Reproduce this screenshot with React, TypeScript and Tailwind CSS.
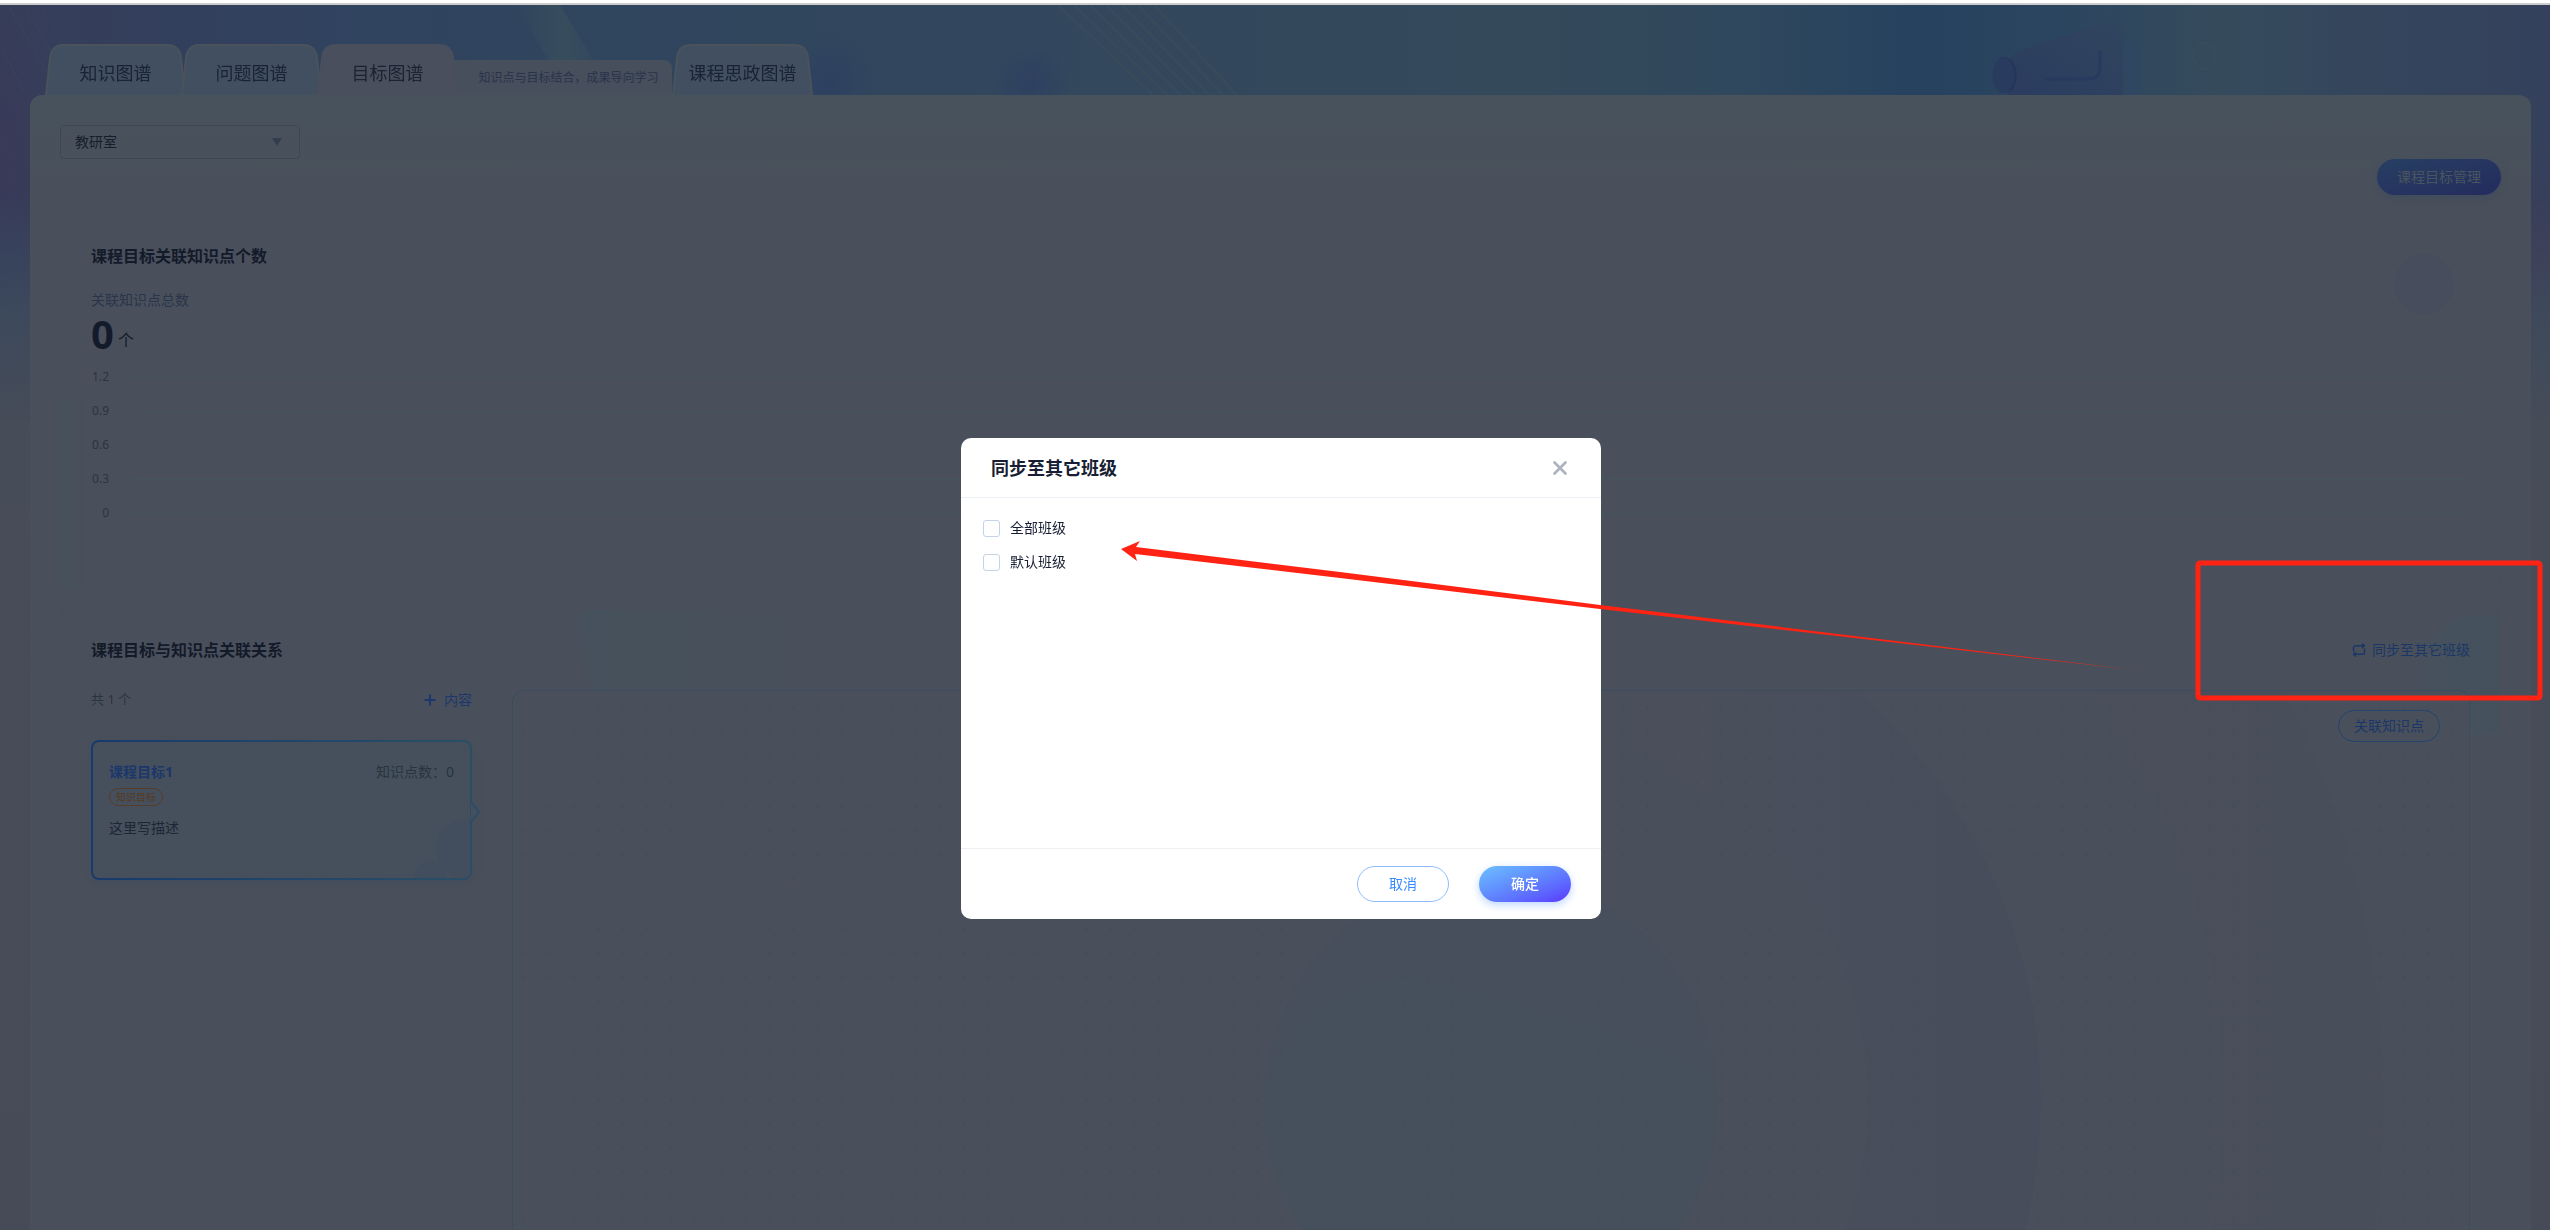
import { X, Plus } from 'lucide-react';

const axisLabels = ['1.2', '0.9', '0.6', '0.3', '0'];
const classes = ['全部班级', '默认班级'];

interface TabProps {
  label: string;
  active?: boolean;
}

function Tab({ label, active }: TabProps) {
  return (
    <button
      type="button"
      role="tab"
      aria-selected={!!active}
      className="relative -mr-[5px] flex h-[51px] w-[141px] items-center justify-center pt-1.5 text-lg text-[#1a2332]"
    >
      <svg className="absolute inset-0 h-full w-full" viewBox="0 0 141 51" preserveAspectRatio="none" aria-hidden="true">
        <path
          d="M1 51 L5 14 C6 5 11 1 19 1 H122 C131 1 135 5 136 14 L140 51"
          fill={active ? '#494f5c' : '#414f60'}
          stroke={active ? '#494f5c' : '#4a535c'}
          strokeWidth="2"
        />
      </svg>
      <span className="relative">{label}</span>
    </button>
  );
}

function Banner() {
  return (
    <svg className="absolute inset-0 h-full w-full" viewBox="0 0 2550 1225" preserveAspectRatio="none" aria-hidden="true">
      <defs>
        <linearGradient id="sky" x1="0" x2="1" y1="0" y2="0">
          <stop offset="0" stopColor="#363d59" />
          <stop offset="0.06" stopColor="#333f5c" />
          <stop offset="0.14" stopColor="#30435f" />
          <stop offset="0.3" stopColor="#30465d" />
          <stop offset="0.44" stopColor="#33475d" />
          <stop offset="0.6" stopColor="#34495a" />
          <stop offset="0.68" stopColor="#30485d" />
          <stop offset="0.75" stopColor="#26425f" />
          <stop offset="0.81" stopColor="#2c455f" />
          <stop offset="0.87" stopColor="#354b5c" />
          <stop offset="0.93" stopColor="#34455c" />
          <stop offset="1" stopColor="#35415c" />
        </linearGradient>
        <linearGradient id="fade" x1="0" x2="0" y1="0" y2="1">
          <stop offset="0.15" stopColor="#464c58" stopOpacity="0" />
          <stop offset="0.25" stopColor="#414e5c" stopOpacity="0.7" />
          <stop offset="0.34" stopColor="#464c58" />
          <stop offset="1" stopColor="#464b57" />
        </linearGradient>
        <radialGradient id="violet">
          <stop offset="0" stopColor="#3b3958" />
          <stop offset="1" stopColor="#3b3958" stopOpacity="0" />
        </radialGradient>
        <radialGradient id="indigo">
          <stop offset="0" stopColor="#2c3d62" stopOpacity="0.7" />
          <stop offset="1" stopColor="#2c3d62" stopOpacity="0" />
        </radialGradient>
        <linearGradient id="ray" x1="0" x2="1" y1="0" y2="0">
          <stop offset="0" stopColor="#3c525b" stopOpacity="0" />
          <stop offset="0.5" stopColor="#3c525b" stopOpacity="0.6" />
          <stop offset="1" stopColor="#3c525b" stopOpacity="0" />
        </linearGradient>
        <linearGradient id="cube" x1="0" x2="1" y1="1" y2="0">
          <stop offset="0" stopColor="#2b3c5f" />
          <stop offset="1" stopColor="#30455e" />
        </linearGradient>
      </defs>
      <rect width="2550" height="1225" fill="url(#sky)" />
      <ellipse cx="0" cy="170" rx="60" ry="170" fill="url(#violet)" opacity="0.7" />
      <ellipse cx="2540" cy="260" rx="60" ry="130" fill="url(#violet)" opacity="0.7" />
      <ellipse cx="0" cy="270" rx="60" ry="90" fill="url(#indigo)" />
      <ellipse cx="830" cy="80" rx="45" ry="50" fill="url(#indigo)" />
      <ellipse cx="1030" cy="80" rx="40" ry="40" fill="url(#indigo)" />
      <path d="M515 0 H560 L615 90 H570 Z" fill="url(#ray)" />
      <g stroke="#3d4e5b" strokeWidth="2" opacity="0.7">
        <path d="M1058 0 L1153 90 M1074 0 L1167 90 M1090 0 L1181 90 M1106 0 L1195 90 M1122 0 L1209 90 M1138 0 L1223 90 M1154 0 L1237 90" />
        <path d="M8 0 L60 90 M24 0 L76 90 M40 0 L92 90 M0 40 L26 90" opacity="0.4" />
      </g>
      <path d="M2008 90 V62 C2008 52 2014 48 2024 44 L2104 18 C2116 14 2123 20 2123 32 V90 Z" fill="url(#cube)" />
      <path d="M2125 35 C2136 37 2140 44 2140 54 V90 H2125 Z" fill="#304761" />
      <ellipse cx="2004" cy="70" rx="11" ry="18" fill="#293b5f" />
      <path d="M2009 54 C2019 64 2017 80 2009 86" fill="none" stroke="#26365a" strokeWidth="2" />
      <path d="M2044 74 H2088 C2096 74 2100 70 2100 62 V46" fill="none" stroke="#273a60" strokeWidth="3" />
      <ellipse cx="2204" cy="51" rx="11" ry="13" fill="none" stroke="#394c5c" strokeWidth="2" />
      <rect width="2550" height="1225" fill="url(#fade)" />
    </svg>
  );
}

function SyncIcon() {
  return (
    <svg
      className="size-3.5"
      viewBox="0 0 14 14"
      fill="none"
      stroke="currentColor"
      strokeWidth="1.5"
      strokeLinecap="round"
      strokeLinejoin="round"
      aria-hidden="true"
    >
      <path d="M1.5 8 V4.5 A1.8 1.8 0 0 1 3.3 2.7 H12.3 M10.4 0.8 L12.5 2.7 L10.4 4.6" />
      <path d="M12.5 6 V9.5 A1.8 1.8 0 0 1 10.7 11.3 H1.7 M3.6 9.4 L1.5 11.3 L3.6 13.2" />
    </svg>
  );
}

function KnowledgeChart() {
  return (
    <section className="relative h-[378px] overflow-hidden rounded-xl border border-[#484e5a] bg-[#4a505b] px-[30px] pt-[30px]">
      <div className="absolute bottom-0 left-0 h-48 w-40 rounded-tr-full bg-linear-to-r from-[#45515c] via-[#494f5b] via-15% to-[#4a505b]" />
      <div className="absolute right-[46px] top-10 size-[60px] rounded-full bg-[#484d5d]" />
      <div className="relative">
        <h2 className="text-base/6 font-bold text-[#131a2a]">课程目标关联知识点个数</h2>
        <p className="mt-5 text-sm/6 text-[#29354a]">关联知识点总数</p>
        <p className="flex h-11 items-end gap-1 text-[#131b2b]">
          <strong className="text-[40px]/[44px]">0</strong>
          <span className="text-base/8">个</span>
        </p>
        <div className="mt-1">
          {axisLabels.map((label) => (
            <div key={label} className="flex h-[34px] items-center gap-5 pr-1">
              <span className="w-[18px] text-right text-xs text-[#2b3542]">{label}</span>
              <span className="h-px flex-1 bg-[#46545e]" />
            </div>
          ))}
        </div>
      </div>
    </section>
  );
}

function TargetCard() {
  return (
    <article className="relative rounded-lg bg-linear-to-r from-[#183a6c] to-[#2b4e66] p-0.5 shadow-[0_4px_10px_#434d5b]">
      <div className="relative h-[136px] overflow-hidden rounded-md bg-[#45505c] px-4 pt-[18px]">
        <div className="absolute -right-6 bottom-0 size-[58px] rounded-full bg-[#424e5d]" />
        <div className="absolute -bottom-[15px] right-6 size-8 rounded-full bg-[#424e5d]" />
        <div className="relative flex justify-between text-sm/6">
          <h3 className="font-bold text-[#1b376b]">课程目标1</h3>
          <span className="text-[#29343f]">知识点数：0</span>
        </div>
        <span className="mt-1 flex h-[18px] w-[54px] items-center justify-center rounded-full border border-[#583c2a] text-[10px] text-[#583820]">
          知识目标
        </span>
        <p className="mt-2.5 text-sm/6 text-[#1c2635]">这里写描述</p>
      </div>
      <svg className="absolute -right-2.5 top-[62px] h-5 w-3" viewBox="0 0 12 20" aria-hidden="true">
        <path d="M1 0 L9 10 L1 20" fill="#45505c" stroke="#2b4e66" strokeWidth="2" />
      </svg>
    </article>
  );
}

function GraphCanvas() {
  return (
    <div className="relative flex-1 overflow-hidden rounded-t-xl border border-b-0 border-[#3b4c5f] bg-[#4a505b]">
      <svg className="absolute inset-0 h-full w-full" aria-hidden="true">
        <defs>
          <pattern id="dots" width="24.4" height="24.4" patternUnits="userSpaceOnUse">
            <circle cx="12" cy="18" r="1.3" fill="#444c58" />
          </pattern>
          <linearGradient id="ring" x1="0" x2="1" y1="0" y2="0">
            <stop offset="0.6" stopColor="#4a505b" />
            <stop offset="0.95" stopColor="#484d5c" />
          </linearGradient>
          <linearGradient id="ringOuter" x1="0" x2="1" y1="0" y2="0">
            <stop offset="0.6" stopColor="#4a505b" />
            <stop offset="0.95" stopColor="#494e5b" />
          </linearGradient>
        </defs>
        <circle cx="978" cy="410" r="893" fill="url(#ringOuter)" />
        <circle cx="978" cy="410" r="733" fill="#4a505b" />
        <circle cx="978" cy="410" r="550" fill="url(#ring)" />
        <circle cx="978" cy="410" r="377" fill="#4a505b" />
        <circle cx="978" cy="410" r="227" fill="#484f5c" />
        <path d="M751 410 C765 340 820 288 905 286 C1000 310 1120 340 1204 390 A227 227 0 0 1 751 430 Z" fill="#45505c" />
        <rect width="100%" height="100%" fill="url(#dots)" />
      </svg>
      <div className="relative flex justify-end px-[29px] pt-[19px]">
        <button type="button" className="h-8 rounded-full border border-[#24436f] px-[15px] text-sm text-[#1b3767]">
          关联知识点
        </button>
      </div>
    </div>
  );
}

function RelationPanel() {
  return (
    <section className="relative flex flex-1 flex-col overflow-hidden rounded-t-xl border border-b-0 border-[#484e5a] bg-[#4a505b] px-[30px] pt-[30px]">
      <svg className="absolute left-[520px] top-0 h-24 w-72" viewBox="0 0 288 96" aria-hidden="true">
        <defs>
          <linearGradient id="beam" x1="0" x2="1" y1="0" y2="0">
            <stop offset="0" stopColor="#45515c" />
            <stop offset="1" stopColor="#4a505b" />
          </linearGradient>
        </defs>
        <path d="M0 2 H288 V96 H16 C6 66 0 34 0 2 Z" fill="url(#beam)" />
      </svg>
      <div className="absolute -right-10 top-[7px] size-[120px] rounded-full bg-linear-to-r from-[#46515d] to-[#43505c]" />
      <div className="relative flex h-6 items-center justify-between">
        <h2 className="text-base/6 font-bold text-[#131a2a]">课程目标与知识点关联关系</h2>
        <button type="button" className="flex items-center gap-1.5 text-sm text-[#1b3767]">
          <SyncIcon />
          同步至其它班级
        </button>
      </div>
      <div className="relative mt-7 flex flex-1 gap-10">
        <div className="w-[381px]">
          <div className="flex h-5 items-center justify-between text-[#29343f]">
            <span className="text-[13px]">共 1 个</span>
            <button type="button" className="flex items-center gap-1.5 text-sm text-[#1b376b]">
              <Plus className="size-4" strokeWidth={3} />
              内容
            </button>
          </div>
          <div className="mt-[30px]">
            <TargetCard />
          </div>
        </div>
        <GraphCanvas />
      </div>
    </section>
  );
}

function SyncDialog() {
  return (
    <div className="absolute inset-0 flex justify-center pl-3 pt-[438px]">
      <div role="dialog" aria-labelledby="sync-title" className="flex h-[481px] w-[640px] flex-col rounded-[10px] bg-white">
        <header className="flex h-[60px] items-center justify-between border-b border-[#ebeef2] px-[30px]">
          <h2 id="sync-title" className="text-lg font-bold text-[#181e33]">同步至其它班级</h2>
          <button type="button" aria-label="关闭" className="text-[#acb4bf]">
            <X className="size-[22px]" strokeWidth={3} />
          </button>
        </header>
        <div className="flex flex-1 flex-col gap-3.5 px-[22px] pt-5">
          {classes.map((name) => (
            <label key={name} className="flex h-5 items-center gap-2.5 text-sm text-[#181e33]">
              <input type="checkbox" className="size-[17px] appearance-none rounded-[3px] border border-[#c6d2e6] bg-white" />
              {name}
            </label>
          ))}
        </div>
        <footer className="flex h-[71px] items-center justify-end gap-[30px] border-t border-[#eeeff1] px-[30px]">
          <button type="button" className="h-9 w-[92px] rounded-full border border-[#8cbbff] text-sm text-[#3a8bff]">
            取消
          </button>
          <button
            type="button"
            className="h-9 w-[92px] rounded-full bg-linear-to-br from-[#6cc0ff] to-[#5a32ff] text-sm font-medium text-white shadow-[0_3px_8px_#bcd6ff]"
          >
            确定
          </button>
        </footer>
      </div>
    </div>
  );
}

function Annotations() {
  return (
    <svg className="pointer-events-none absolute inset-0 h-full w-full" viewBox="0 0 2550 1230" aria-hidden="true">
      <rect x="2198" y="563" width="342" height="135" rx="2" fill="none" stroke="#ff2314" strokeWidth="5" />
      <path d="M1121 549 L1140 541 L1136 547 L1340 572 L1600 605 L2135 670 L1600 609 L1340 578 L1135 554 L1137 561 Z" fill="#ff2314" />
    </svg>
  );
}

export default function App() {
  return (
    <div className="relative flex h-screen flex-col overflow-hidden bg-white font-['Noto_Sans','Noto_Sans_CJK_SC',sans-serif]">
      <div className="mt-[3px] h-0.5 shrink-0 bg-[#cccccc]" />
      <div className="relative flex flex-1 flex-col pl-[30px] pr-[19px] pt-[39px]">
        <Banner />
        <nav role="tablist" className="relative flex items-end pl-[15px]">
          <Tab label="知识图谱" />
          <Tab label="问题图谱" />
          <Tab label="目标图谱" active />
          <p className="flex h-[35px] w-[219px] items-center justify-center rounded-tr-lg bg-[#474e5c] pl-3 text-xs text-[#29344a]">
            知识点与目标结合，成果导向学习
          </p>
          <Tab label="课程思政图谱" />
        </nav>
        <main className="relative flex flex-1 flex-col rounded-t-xl bg-linear-to-b from-[#47525c] to-[#4a505b] to-10% px-[30px] pt-[30px]">
          <div className="flex h-[34px] w-60 items-center rounded border border-[#3e4655]">
            <select aria-label="教研室" className="h-full w-full appearance-none px-3.5 text-sm text-[#161e2c]">
              <option>教研室</option>
            </select>
            <svg className="mr-4 h-2 w-3 shrink-0" viewBox="0 0 12 8" aria-hidden="true">
              <path d="M1 0 H11 L6 8 Z" fill="#323e4c" />
            </svg>
          </div>
          <div className="flex justify-end">
            <button
              type="button"
              className="h-9 w-[124px] rounded-full bg-linear-to-br from-[#273f62] to-[#242b5e] text-sm text-[#4a545e] shadow-[0_3px_8px_#3e4b5e]"
            >
              课程目标管理
            </button>
          </div>
          <div className="mt-[18px] flex flex-1 flex-col gap-4">
            <KnowledgeChart />
            <RelationPanel />
          </div>
        </main>
      </div>
      <SyncDialog />
      <Annotations />
    </div>
  );
}
